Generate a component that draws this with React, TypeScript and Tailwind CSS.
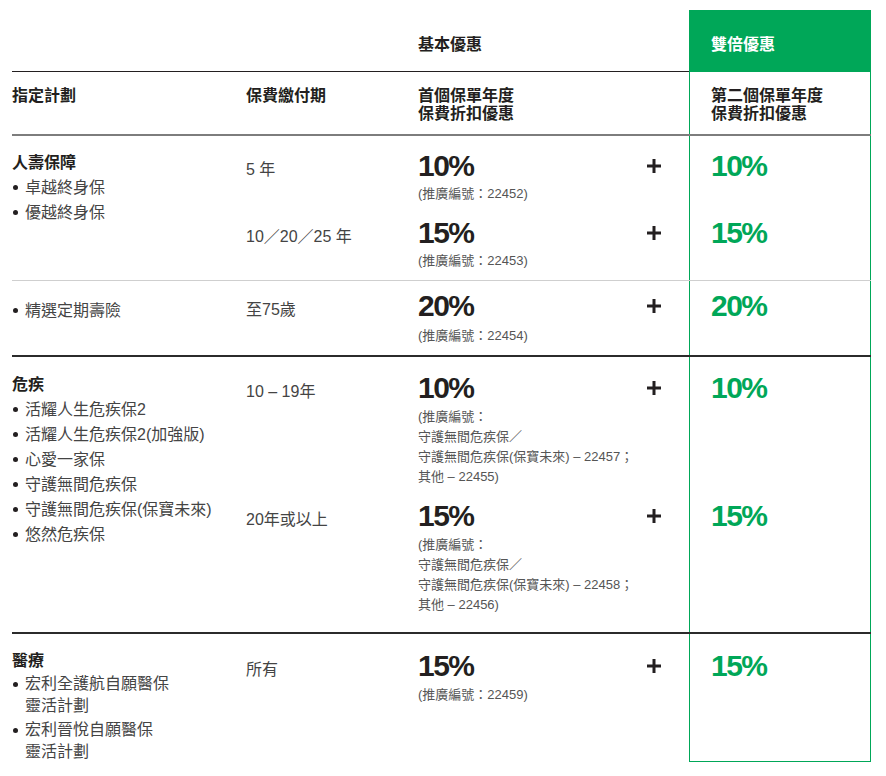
import React from "react";

type Tier = {
  term: string;
  pct: string;
  notes: string[];
  pad: string;
  noteGap: string;
};

const Plus = () => (
  <svg width="14" height="14" viewBox="0 0 14 14" className="shrink-0">
    <path d="M7 0v14M0 7h14" stroke="#231f20" strokeWidth="3" />
  </svg>
);

const Item = ({ children, tight }: { children: React.ReactNode; tight?: boolean }) => (
  <div className={`flex items-start gap-[7px] pl-[1px] ${tight ? "leading-[22px]" : "leading-[25px]"}`}>
    <span
      className={`h-[5px] w-[5px] shrink-0 rounded-full bg-[#231f20] ${tight ? "mt-[9px]" : "mt-[10px]"}`}
    />
    <span>{children}</span>
  </div>
);

const TierRow = ({ tier, last, closed }: { tier: Tier; last?: boolean; closed?: boolean }) => (
  <div className={`grid grid-cols-[172px_271px_182px] ${last ? "flex-1" : ""}`}>
    <div className={tier.pad}>
      <div className="mt-[6px] text-[16px] leading-[25px] text-[#444]">{tier.term}</div>
    </div>
    <div className={`flex ${tier.pad}`}>
      <div className="w-[229px]">
        <div className="text-[30px] font-bold leading-[30px] tracking-[-1.5px] text-[#231f20]">
          {tier.pct}
        </div>
        <div className={`${tier.noteGap} text-[13px] leading-[20px] text-[#555]`}>
          {tier.notes.map((n, i) => (
            <div key={i}>{n}</div>
          ))}
        </div>
      </div>
      <div className="flex h-[30px] items-center">
        <Plus />
      </div>
    </div>
    <div
      className={`border-x border-[#00a758] pl-[21px] ${tier.pad} ${closed ? "border-b" : ""}`}
    >
      <div className="text-[30px] font-bold leading-[30px] tracking-[-1.5px] text-[#00a758]">
        {tier.pct}
      </div>
    </div>
  </div>
);

const App = () => {
  return (
    <div className="min-h-[776px] bg-white pl-[12px] pt-[10px] font-[family-name:'Liberation_Sans','Noto_Sans_CJK_TC',sans-serif] text-[#231f20]">
      <div className="w-[859px]">
        {/* header band */}
        <div className="grid h-[61px] grid-cols-[234px_172px_271px_182px] text-[16px] font-bold leading-[24px]">
          <div />
          <div />
          <div className="pt-[23px]">基本優惠</div>
          <div className="bg-[#00a758] pl-[22px] pt-[23px] text-white">雙倍優惠</div>
        </div>
        <div className="grid grid-cols-[234px_172px_271px_182px] text-[16px] font-bold leading-[18px]">
          <div className="border-t border-[#231f20] pb-[11px] pt-[15px]">指定計劃</div>
          <div className="border-t border-[#231f20] pb-[11px] pt-[15px]">保費繳付期</div>
          <div className="border-t border-[#231f20] pb-[11px] pt-[15px]">
            首個保單年度
            <br />
            保費折扣優惠
          </div>
          <div className="border-x border-t border-[#00a758] pb-[11px] pl-[21px] pt-[15px]">
            第二個保單年度
            <br />
            保費折扣優惠
          </div>
        </div>

        {/* 人壽保障 */}
        <div className="grid grid-cols-[234px_625px] border-t-2 border-[#7d7d7d]">
          <div className="pt-[14px] text-[16px] leading-[25px] text-[#444]">
            <div className="font-bold text-[#231f20]">人壽保障</div>
            <Item>卓越終身保</Item>
            <Item>優越終身保</Item>
          </div>
          <div className="flex flex-col">
            <TierRow
              tier={{ term: "5 年", pct: "10%", notes: ["(推廣編號：22452)"], pad: "pt-[15px]", noteGap: "mt-[3px]" }}
            />
            <TierRow
              tier={{
                term: "10／20／25 年",
                pct: "15%",
                notes: ["(推廣編號：22453)"],
                pad: "pt-[14px] pb-[9px]",
                noteGap: "mt-[3px]",
              }}
            />
          </div>
        </div>

        {/* 精選定期壽險 */}
        <div className="grid grid-cols-[234px_625px] border-t border-[#cfcfcf]">
          <div className="pt-[17px] text-[16px] text-[#444]">
            <Item>精選定期壽險</Item>
          </div>
          <div className="flex flex-col">
            <TierRow
              tier={{
                term: "至75歲",
                pct: "20%",
                notes: ["(推廣編號：22454)"],
                pad: "pt-[10px] pb-[9px]",
                noteGap: "mt-[5px]",
              }}
            />
          </div>
        </div>

        {/* 危疾 */}
        <div className="grid grid-cols-[234px_625px] border-t-2 border-[#2b2b2b]">
          <div className="pt-[15px] text-[16px] leading-[25px] text-[#444]">
            <div className="font-bold text-[#231f20]">危疾</div>
            <Item>活耀人生危疾保2</Item>
            <Item>活耀人生危疾保2(加強版)</Item>
            <Item>心愛一家保</Item>
            <Item>守護無間危疾保</Item>
            <Item>守護無間危疾保(保寶未來)</Item>
            <Item>悠然危疾保</Item>
          </div>
          <div className="flex flex-col">
            <TierRow
              tier={{
                term: "10 – 19年",
                pct: "10%",
                notes: ["(推廣編號：", "守護無間危疾保／", "守護無間危疾保(保寶未來) – 22457；", "其他 – 22455)"],
                pad: "pt-[16px]",
                noteGap: "mt-[4px]",
              }}
            />
            <TierRow
              tier={{
                term: "20年或以上",
                pct: "15%",
                notes: ["(推廣編號：", "守護無間危疾保／", "守護無間危疾保(保寶未來) – 22458；", "其他 – 22456)"],
                pad: "pt-[14px] pb-[17px]",
                noteGap: "mt-[4px]",
              }}
            />
          </div>
        </div>

        {/* 醫療 */}
        <div className="grid grid-cols-[234px_625px] grid-rows-[128px] border-t-2 border-[#2b2b2b]">
          <div className="pt-[14px] text-[16px] text-[#444]">
            <div className="font-bold leading-[25px] text-[#231f20]">醫療</div>
            <Item tight>
              宏利全護航自願醫保
              <br />
              靈活計劃
            </Item>
            <div className="mt-[2px]">
              <Item tight>
                宏利晉悅自願醫保
                <br />
                靈活計劃
              </Item>
            </div>
          </div>
          <div className="flex flex-col">
            <TierRow
              last
              closed
              tier={{ term: "所有", pct: "15%", notes: ["(推廣編號：22459)"], pad: "pt-[17px]", noteGap: "mt-[4px]" }}
            />
          </div>
        </div>
      </div>
    </div>
  );
};

export default App;
